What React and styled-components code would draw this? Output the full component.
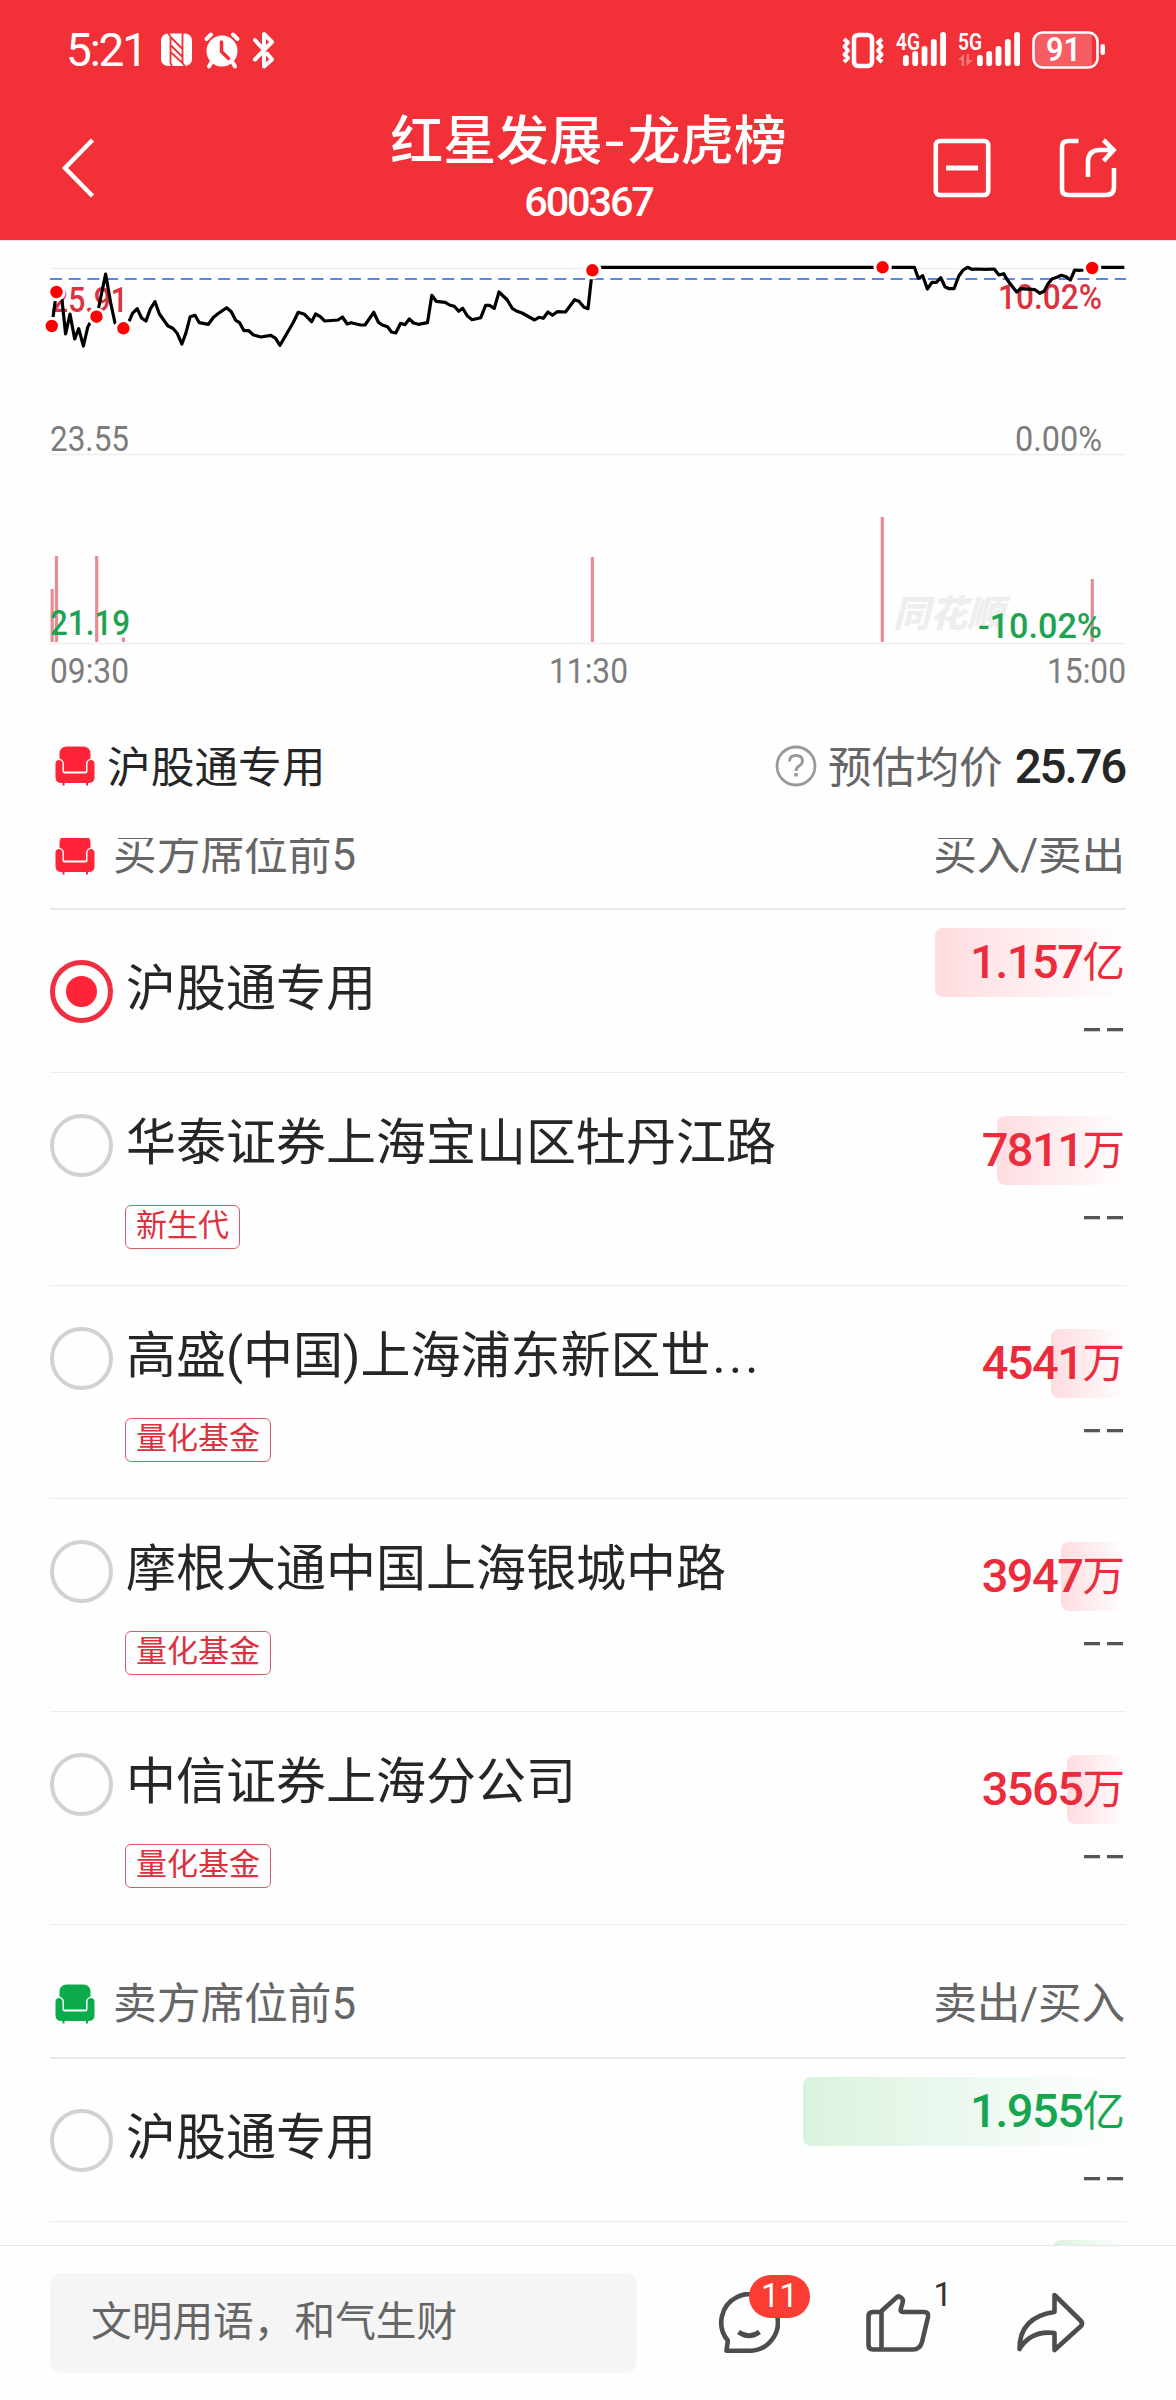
import React, { useState } from 'react'
import styled, { createGlobalStyle, css } from 'styled-components'

const GlobalStyle = createGlobalStyle`
	* {
		box-sizing: border-box;
	}
	body {
		margin: 0;
		background-color: #fefefe;
		font-family: Roboto, "Noto Sans CJK SC", sans-serif;
	}
`

const Page = styled.div`
	width: 1176px;
	height: 2400px;
	display: flex;
	flex-direction: column;
	overflow: hidden;
	background-color: #fefefe;
	color: #262626;
`

const Header = styled.header`
	flex: 0 0 241px;
	background-color: #f23037;
	border-bottom: 1px solid #fde0e2;
	color: #fff;
`

const StatusBar = styled.div`
	height: 100px;
	padding: 0 71px 0 66px;
	display: flex;
	justify-content: space-between;
	align-items: center;
`

const StatusGroup = styled.div`
	display: flex;
	align-items: center;
	svg {
		overflow: visible;
	}
`

const Clock = styled.span`
	width: 95px;
	font-size: 46px;
	line-height: 54px;
	letter-spacing: -2.2px;
	white-space: nowrap;
`

const NavBar = styled.div`
	height: 140px;
	padding: 0 59px 0 60px;
	display: grid;
	grid-template-columns: 184px 1fr 184px;
`

const NavIcons = styled.div`
	height: 136px;
	display: flex;
	align-items: center;
	justify-content: ${(props) => (props.end ? 'space-between' : 'flex-start')};
`

const Titles = styled.div`
	text-align: center;
	white-space: nowrap;
`

const Title = styled.h1`
	margin: 0;
	padding-top: 10px;
	font-size: 53px;
	line-height: 62px;
	font-weight: 500;
`

const TitleDash = styled.span`
	font-family: Inter, sans-serif;
	font-weight: 400;
	margin: 0 1px 0 0;
`

const Code = styled.div`
	margin-top: 7px;
	font-size: 41.5px;
	line-height: 44px;
	font-weight: 500;
	letter-spacing: -2.2px;
`

const ChartArea = styled.section`
	flex: 0 0 459px;
	svg {
		display: block;
	}
`

const Summary = styled.section`
	flex: 0 0 138px;
	height: 138px;
	padding: 0 50px 8px 55px;
	display: flex;
	align-items: center;
	justify-content: space-between;
	font-size: 43.7px;
`

const SummarySide = styled.div`
	display: flex;
	align-items: center;
	gap: ${(props) => props.gap}px;
	color: ${(props) => props.color};
	white-space: nowrap;
	svg {
		margin-top: 2px;
	}
	span {
		margin-top: -2px;
	}
`

const Price = styled.span`
	margin-left: 12px;
	margin-right: 1px;
	font-size: 47.5px;
	font-weight: 500;
	letter-spacing: -2.2px;
	color: #262626;
`

const ListArea = styled.main`
	flex: 1 1 0;
	min-height: 0;
	padding: 0 50px;
	overflow: hidden;
`

// the list is scrolled a little below its first header
const Scrolled = styled.div`
	margin-top: -62px;
`

const SectionHeader = styled.div`
	height: 134px;
	padding: 18px 0 0 5px;
	border-bottom: 2px solid #e9e9e9;
	display: flex;
	align-items: center;
	font-size: 43.7px;
	color: #666;
	svg {
		margin-top: 8px;
		margin-right: 18px;
	}
`

const SectionRight = styled.span`
	margin-left: auto;
	padding-right: 1px;
	letter-spacing: -0.2px;
`

const Row = styled.div`
	height: ${(props) => (props.tagged ? '213px' : '163px')};
	padding-top: ${(props) => (props.tagged ? '41px' : '50px')};
	border-bottom: 1px solid #ececec;
	display: flex;
	justify-content: space-between;
`

const Seat = styled.div`
	display: grid;
	grid-template-columns: 63px auto;
	column-gap: 12px;
	row-gap: 28px;
	align-content: start;
	justify-items: start;
`

const Radio = styled.span`
	width: 63px;
	height: 63px;
	border-radius: 50%;
	border: 4px solid #d2d2d2;
	display: flex;
	align-items: center;
	justify-content: center;
	${(props) => props.checked && css`
		border: 5px solid #ed2f40;
		&:after {
			content: "";
			width: 31px;
			height: 31px;
			border-radius: 50%;
			background-color: #ff2438;
		}
	`}
`

const Name = styled.span`
	padding-left: 1px;
	height: 63px;
	line-height: 58px;
	font-size: 50px;
	white-space: nowrap;
`

const Ellipsis = styled.span`
	margin-left: 2px;
	letter-spacing: 3.2px;
`

const Tag = styled.span`
	grid-column: 2;
	height: 44px;
	padding: 0 10px;
	border: 1px solid #d0606a;
	border-radius: 6px;
	font-size: 31px;
	line-height: 40px;
	color: #dc3240;
`

const Amounts = styled.div`
	margin-top: ${(props) => (props.tagged ? '2px' : '-32px')};
	display: flex;
	flex-direction: column;
	align-items: flex-end;
`

const Amount = styled.div`
	height: 69px;
	width: ${(props) => props.bar}px;
	border-radius: 8px 0 0 8px;
	background: linear-gradient(90deg, ${(props) => (props.sell ? '#daf3e0' : '#ffdce0')}, #fefefe);
	color: ${(props) => (props.sell ? '#17a650' : '#eb2c3c')};
	display: flex;
	justify-content: flex-end;
	align-items: center;
	padding: 0 1px 2px 0;
	white-space: nowrap;
	font-size: 47px;
	font-weight: 500;
	letter-spacing: -1.5px;
`

const Unit = styled.span`
	margin-top: -6px;
	font-size: 42.5px;
	font-weight: 400;
	letter-spacing: 0;
`

const Dashes = styled.div`
	margin-top: 4px;
	font-family: Inter, sans-serif;
	font-size: 53px;
	font-weight: 300;
	line-height: 53px;
	letter-spacing: -1px;
	color: #555;
`

const BottomBar = styled.footer`
	flex: 0 0 155px;
	border-top: 1px solid #e8e8e8;
	padding: 27px 90px 0 50px;
	display: flex;
	align-items: flex-start;
	justify-content: space-between;
`

const Input = styled.div`
	width: 587px;
	height: 100px;
	padding-left: 41px;
	border-radius: 12px;
	background-color: #f5f5f5;
	font-size: 40.7px;
	line-height: 99px;
	color: #666;
`

const Actions = styled.div`
	width: 368px;
	padding-top: 19px;
	display: flex;
	justify-content: space-between;
`

const Action = styled.div`
	position: relative;
	height: 64px;
	svg {
		display: block;
	}
`

const Badge = styled.span`
	position: absolute;
	left: 31px;
	top: -17px;
	width: 61px;
	height: 43px;
	border-radius: 22px;
	background-color: #fa3c32;
	color: #fff;
	font-size: 33px;
	line-height: 42px;
	text-align: center;
`

const Count = styled.span`
	position: absolute;
	left: 68px;
	top: -17px;
	font-size: 33px;
	line-height: 40px;
	color: #333;
`

const Sofa = ({ color }) => (
	<svg width="40" height="40" viewBox="0 0 40 40" fill={color}>
		<path d="M4.500 12.500 V8 Q4.500 0.500 12 0.500 H28 Q35.500 0.500 35.500 8 V12.500 Q31 14 31 18 V25.500 H9 V18 Q9 14 4.500 12.500 Z" />
		<path d="M3.500 14 Q7.500 14 7.500 18 V25 Q7.500 27.500 10 27.500 H30 Q32.500 27.500 32.500 25 V18 Q32.500 14 36.500 14 Q39.500 14.500 39.500 18 V31 Q39.500 37 33.500 37 H33 V39.500 H31 V37 H9.500 V39.500 H7.500 V37 H6.500 Q0.500 37 0.500 31 V18 Q0.500 14.500 3.500 14 Z" />
	</svg>
)

const NfcIcon = () => (
	<svg width="43" height="36" viewBox="0 0 43 36">
		<rect x="0" y="1.500" width="31" height="32.500" rx="7" fill="#fff" />
		<path d="M7 1 L9.500 4.500 V31 L11 34 M21.500 1 V31 L24 34.500 M9.500 5 L21.500 17 M9.500 13 L21.500 25 M9.500 20 L21.500 31" fill="none" stroke="#f23037" strokeWidth="1.800" />
	</svg>
)

const AlarmIcon = () => (
	<svg width="48" height="38" viewBox="0 0 48 38" fill="none" stroke="#fff" strokeWidth="4" strokeLinecap="round">
		<circle cx="18" cy="20" r="15.500" fill="#fff" stroke="none" />
		<path d="M2.500 8 L7 3.500 M33.500 8 L29 3.500 M7 32 L5 35.500 M29 32 L31 35.500" />
		<path d="M17.500 11 V20.500 L24.500 27.500" stroke="#f23037" strokeWidth="3.500" />
	</svg>
)

const BluetoothIcon = () => (
	<svg width="24" height="38" viewBox="0 0 24 38" fill="none" stroke="#fff" strokeWidth="4" strokeLinecap="round" strokeLinejoin="round">
		<path d="M3 9 L12 19 L20 11 L12 3 V15 M3 28.500 L12 19 M12 24 L15 22.500 L20 28.500 L12 35.500 V24" />
	</svg>
)

const VibrateIcon = () => (
	<svg width="54" height="38" viewBox="0 0 54 38" fill="none" stroke="#fff" strokeWidth="4" strokeLinejoin="round">
		<rect x="12" y="4" width="18" height="31" rx="4" strokeWidth="4.500" />
		<path d="M2 8 L6 11.500 L2.500 15.500 L6 19.500 L2.500 23.500 L6 27 L2 31 M40 8 L36 11.500 L39.500 15.500 L36 19.500 L39.500 23.500 L36 27 L40 31" />
	</svg>
)

const bars = [[0, 24, 11], [9.3, 20, 15], [18.6, 15, 20], [27.9, 8, 27], [37.2, 1, 34]]

const Signal = ({ label, offset, arrows }) => (
	<svg width={offset + 55} height="38" viewBox={`0 0 ${offset + 55} 38`} fill="#fff">
		<text x="0" y="19" fontSize="24" fontWeight="600" textLength="24" lengthAdjust="spacingAndGlyphs" fontFamily="Roboto, sans-serif">{label}</text>
		{bars.map(([x, y, h]) => <rect key={x} x={offset + x} y={y} width="5.800" height={h} rx="2.800" />)}
		{arrows && <path d="M0 29 L6 23 V35 H3.500 V29 Z M8.500 23 H11 V29 H15 L8.500 35 Z" opacity="0.35" />}
	</svg>
)

const Battery = () => (
	<svg width="73" height="40" viewBox="0 0 73 40">
		<path d="M10 3 H60 V37 H10 Q2 37 2 29 V11 Q2 3 10 3 Z" fill="#fff" opacity="0.22" />
		<rect x="1.500" y="2.500" width="64" height="35" rx="9" fill="none" stroke="#fff" strokeWidth="2.600" />
		<rect x="68.500" y="14" width="4.500" height="11" rx="2.200" fill="#fff" />
		<text x="14" y="31" fontSize="33" fontWeight="600" fill="#fff" textLength="35" lengthAdjust="spacingAndGlyphs" fontFamily="Roboto, sans-serif">91</text>
	</svg>
)

const BackIcon = () => (
	<svg width="36" height="60" viewBox="0 0 36 60" fill="none" stroke="#fff" strokeWidth="4.500">
		<path d="M32.500 2 L5 30 L32.500 58" />
	</svg>
)

const MinusIcon = () => (
	<svg width="58" height="60" viewBox="0 0 58 60" fill="none" stroke="#fff" strokeWidth="4.600">
		<rect x="2.800" y="3" width="52.400" height="54" rx="4" />
		<path d="M13 30 H45" strokeWidth="5" />
	</svg>
)

const ExportIcon = () => (
	<svg width="58" height="60" viewBox="0 0 58 60" fill="none" stroke="#fff" strokeWidth="4.600">
		<path d="M19.500 3 H9 Q3 3 3 9 V51 Q3 57 9 57 H47 Q55 57 55 49 V30" />
		<path d="M29 39 V24 Q29 12 41 12 H54 M44.500 2 L54.500 12 L44.500 23" />
	</svg>
)

const HelpIcon = () => (
	<svg width="42" height="42" viewBox="0 0 42 42" fill="none" stroke="#999" strokeWidth="2.800">
		<circle cx="21" cy="21" r="19" />
		<path d="M14.500 16.500 Q14.500 10.500 21 10.500 Q27.500 10.500 27.500 16 Q27.500 19 24 21 Q21 22.800 21 26" />
		<circle cx="21" cy="29.800" r="2" fill="#999" stroke="none" />
	</svg>
)

const CommentIcon = () => (
	<svg width="62" height="64" viewBox="0 0 62 64" fill="none" stroke="#4d4d4d" strokeWidth="4.600" strokeLinejoin="round">
		<path d="M8.500 58.700 L9.800 48.500 A28.300 28.300 0 1 1 31 58.700 Z" />
		<path d="M20.500 40 Q31 47.500 41.500 40" strokeWidth="5" />
	</svg>
)

const LikeIcon = () => (
	<svg width="65" height="64" viewBox="0 0 65 64" fill="none" stroke="#4d4d4d" strokeWidth="4.600" strokeLinejoin="round">
		<path d="M14.500 20 L30.500 5.500 Q32.500 3.500 35 5.500 Q37.500 7.500 36.800 10 L34.800 17 Q34 20 37 20 H58 Q63 20 62 25 L56 50 Q54 57.500 47 57.500 H7 Q2.500 57.500 2.500 53 V24.500 Q2.500 20 7 20 Z M15.500 20 V57.500" />
	</svg>
)

const ForwardIcon = () => (
	<svg width="70" height="64" viewBox="0 0 70 64" fill="none" stroke="#4d4d4d" strokeWidth="4.600" strokeLinejoin="round">
		<path d="M38.500 3 L64.500 28.500 Q67.500 31.500 64.500 34.500 L38.500 58 V41 Q15 38 3.500 57 Q3.500 25 38.500 20 Z" />
	</svg>
)

const morning = '51.8,86 56.5,52 62,60 65.6,94 70,74 74.7,99 78.7,88.7 83.4,106 87.8,87 90,83 96.5,76.7 99,66 105.6,34 110.7,63 115,83 123.4,88.3 129.7,80 132.5,73.3 137.2,68.7 141.6,78 146,81 150.3,69 155,61.7 159.4,74 163.7,80 168,86 172.8,88.3 177.2,93.3 181.9,104 185.8,93.3 190.2,76.7 195,75.3 199.3,82.7 208.4,84.3 213.5,77.3 217.9,73.7 226.6,67.7 231.3,71.7 235.7,80.3 239.6,82.7 244,90.7 248.7,90.7 253.5,95 261,97 270.9,95.3 275.6,98.3 280,105.3 293.4,82.3 298.2,72.3 304.5,74.3 311.6,81.7 315.6,74 320.3,76.7 324.7,81 338,80 342.4,77 347.2,84 351.1,82.7 360.6,85 365,85 373.7,72.3 378.4,82.3 382.4,85 387.5,86.7 391.5,92 395.8,93 400.6,83.3 404.9,84.7 409.3,79 413.6,83 418.4,84.3 427.5,82.7 431.8,55.3 436.2,61.3 445.2,62.3 449.6,65 454.3,66.3 458.7,71.3 462.7,68.3 467.4,76 472.1,79.7 480.8,77.7 485.6,65.3 489.5,65.3 494.3,68.3 499,52 507.3,60 512.5,68.7 517.2,71.3 522,73 534.6,80 539,77.3 543.3,78.3 548,72 552.4,75.3 557.2,71.7 565.5,72 574.6,59.7 578.9,61.3 584,67.3 588,68.7 591.2,40 592.4,30.3'
const afternoon = '598,27.3 914.4,27.3 918.3,38.3 922.7,35.7 927.4,49 932,42.3 936.4,42.3 940.8,37.7 945,46.7 949,48.7 954,48.7 958.8,36 963.1,30 967.5,27.3 971.8,29.3 976.5,29 985.1,29.3 994.2,29 998.9,35 1003.6,33.7 1008.3,41.3 1012.7,47 1016.6,52 1020.5,48.7 1035,49.7 1039.8,53.3 1044.1,51.3 1048.4,43.3 1052.3,38.7 1057,37.3 1061.4,35.3 1066.1,36.7 1070.4,40 1074.7,30 1079,30.3 1083.8,30 1092.8,28 1102.3,27.3 1124.3,27.3'
const dots = [[51.8, 86], [56.5, 52], [96.5, 76.7], [123.4, 88.3], [592.4, 30.3], [882.6, 27.3], [1092.2, 28]]
const volumes = [[52.2, 349], [56.5, 316], [96.7, 316], [123.5, 397.5], [592.4, 317], [882.3, 277], [1092.3, 339]]
const labels = [
	{ text: '25.91', x: 51, y: 72, w: 77, color: '#dc3240', bold: true },
	{ text: '10.02%', x: 998, y: 69, w: 104, color: '#dc3240', bold: true },
	{ text: '23.55', x: 50, y: 211, w: 79, color: '#7c7c7c' },
	{ text: '0.00%', x: 1015, y: 211, w: 87, color: '#7c7c7c' },
	{ text: '21.19', x: 50, y: 395, w: 80, color: '#1fa352', bold: true },
	{ text: '-10.02%', x: 978, y: 398, w: 124, color: '#1fa352', bold: true },
	{ text: '09:30', x: 50, y: 442.5, w: 79, color: '#7c7c7c' },
	{ text: '11:30', x: 549, y: 442.5, w: 79, color: '#7c7c7c' },
	{ text: '15:00', x: 1047, y: 442.5, w: 79, color: '#7c7c7c' },
]

const Chart = () => (
	<svg width="1176" height="459" viewBox="0 1 1176 459" fontFamily="Roboto, sans-serif" fontSize="34.500">
		<path d="M50 28.500 H1126 M50 214.500 H1126 M50 403.500 H1126" stroke="#efefef" strokeWidth="1.500" />
		<text x="893" y="387" fontSize="37" fontWeight="900" fontStyle="italic" fill="#eee" fontFamily="Noto Sans CJK SC, sans-serif">同花顺</text>
		{volumes.map(([x, y]) => (
			<line key={x} x1={x} x2={x} y1={y} y2="402" stroke="#e98b92" strokeWidth="3.200" />
		))}
		{labels.map((l) => (
			<text key={l.text} x={l.x} y={l.y} fill={l.color} fontWeight={l.bold ? 500 : 400} textLength={l.w} lengthAdjust="spacingAndGlyphs">{l.text}</text>
		))}
		<path d="M50 39 H1126" stroke="#5f86dc" strokeWidth="2" strokeDasharray="12 6.680" />
		<polyline points={morning} fill="none" stroke="#000" strokeWidth="3.200" strokeLinejoin="round" />
		<polyline points={afternoon} fill="none" stroke="#000" strokeWidth="3.200" strokeLinejoin="round" />
		{dots.map(([x, y]) => (
			<circle key={x} cx={x} cy={y} r="7.700" fill="#f00" stroke="#fff" strokeWidth="3" />
		))}
	</svg>
)

const buyers = [
	{ id: 'b1', name: '沪股通专用', value: '1.157', unit: '亿', bar: 191 },
	{ id: 'b2', name: '华泰证券上海宝山区牡丹江路', tag: '新生代', value: '7811', unit: '万', bar: 129 },
	{ id: 'b3', name: '高盛(中国)上海浦东新区世', cut: true, tag: '量化基金', value: '4541', unit: '万', bar: 75 },
	{ id: 'b4', name: '摩根大通中国上海银城中路', tag: '量化基金', value: '3947', unit: '万', bar: 65 },
	{ id: 'b5', name: '中信证券上海分公司', tag: '量化基金', value: '3565', unit: '万', bar: 59 },
]

const sellers = [
	{ id: 's1', name: '沪股通专用', value: '1.955', unit: '亿', bar: 323 },
	{ id: 's2', bar: 73 },
]

const SeatRow = ({ seat, sell, selected, onSelect }) => {
	const tagged = Boolean(seat.tag)
	return (
		<Row tagged={tagged} onClick={() => { onSelect(seat.id) }}>
			<Seat>
				<Radio checked={selected === seat.id} />
				<Name>{seat.name}{seat.cut && <Ellipsis>...</Ellipsis>}</Name>
				{tagged && <Tag>{seat.tag}</Tag>}
			</Seat>
			<Amounts tagged={tagged}>
				<Amount bar={seat.bar} sell={sell}>
					{seat.value}
					<Unit>{seat.unit}</Unit>
				</Amount>
				{seat.value && <Dashes>--</Dashes>}
			</Amounts>
		</Row>
	)
}

const App = () => {
	const [selected, setSelected] = useState('b1')

	return (
		<Page>
			<GlobalStyle />
			<Header>
				<StatusBar>
					<StatusGroup>
						<Clock>5:21</Clock>
						<NfcIcon />
						<AlarmIcon />
						<BluetoothIcon />
					</StatusGroup>
					<StatusGroup>
						<VibrateIcon />
						<Signal label="4G" offset={7} />
						<Signal label="5G" offset={19} arrows />
						<Battery />
					</StatusGroup>
				</StatusBar>
				<NavBar>
					<NavIcons><BackIcon /></NavIcons>
					<Titles>
						<Title>红星发展<TitleDash>-</TitleDash>龙虎榜</Title>
						<Code>600367</Code>
					</Titles>
					<NavIcons end><MinusIcon /><ExportIcon /></NavIcons>
				</NavBar>
			</Header>
			<ChartArea>
				<Chart />
			</ChartArea>
			<Summary>
				<SummarySide gap={12} color="#262626">
					<Sofa color="#ff2438" />
					<span>沪股通专用</span>
				</SummarySide>
				<SummarySide gap={11} color="#666">
					<HelpIcon />
					<span>预估均价<Price>25.76</Price></span>
				</SummarySide>
			</Summary>
			<ListArea>
				<Scrolled>
					<SectionHeader>
						<Sofa color="#ff2438" />
						<span>买方席位前5</span>
						<SectionRight>买入/卖出</SectionRight>
					</SectionHeader>
					{buyers.map((seat) => (
						<SeatRow key={seat.id} seat={seat} selected={selected} onSelect={setSelected} />
					))}
					<SectionHeader>
						<Sofa color="#0bab4b" />
						<span>卖方席位前5</span>
						<SectionRight>卖出/买入</SectionRight>
					</SectionHeader>
					{sellers.map((seat) => (
						<SeatRow key={seat.id} seat={seat} sell selected={selected} onSelect={setSelected} />
					))}
				</Scrolled>
			</ListArea>
			<BottomBar>
				<Input>文明用语，和气生财</Input>
				<Actions>
					<Action>
						<CommentIcon />
						<Badge>11</Badge>
					</Action>
					<Action>
						<LikeIcon />
						<Count>1</Count>
					</Action>
					<Action>
						<ForwardIcon />
					</Action>
				</Actions>
			</BottomBar>
		</Page>
	)
}

export default App
